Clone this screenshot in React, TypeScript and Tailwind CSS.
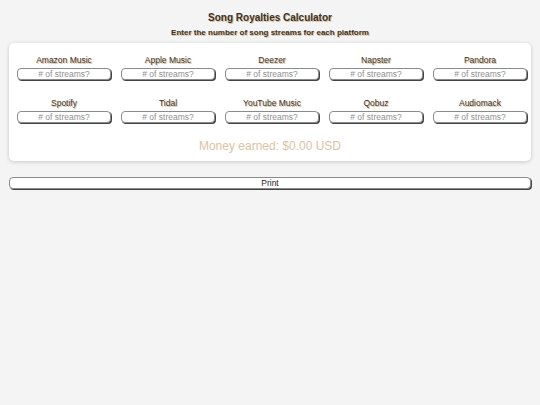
import { useState } from 'react';

const platforms = [
  'Amazon Music',
  'Apple Music',
  'Deezer',
  'Napster',
  'Pandora',
  'Spotify',
  'Tidal',
  'YouTube Music',
  'Qobuz',
  'Audiomack',
];

const shadowText = '[text-shadow:1px_1px_0_#dcc09a]';

export default function App() {
  const [values, setValues] = useState<Record<string, string>>({});

  return (
    <div className="min-h-[405px] bg-[#f4f4f4] font-['Liberation_Sans',Arial,sans-serif] pt-[12px]">
      <h1 className={`text-center text-[10px] font-bold text-[#3a332b] leading-[12px] ${shadowText}`}>
        Song Royalties Calculator
      </h1>
      <p className={`text-center text-[8px] font-bold text-[#3a332b] mt-[4px] leading-[10px] ${shadowText}`}>
        Enter the number of song streams for each platform
      </p>

      <div className="mx-[9px] mt-[5px] bg-white rounded-[5px] shadow-[0_1px_4px_rgba(0,0,0,0.18)] pt-[12px] pb-[8px]">
        <div className="grid grid-cols-[repeat(5,94px)] pl-[8px] gap-x-[10px] gap-y-[18px]">
          {platforms.map((p) => (
            <div key={p} className="flex flex-col items-center">
              <label className={`text-[8.5px] text-[#3a332b] leading-[10px] mb-[3px] ${shadowText}`}>{p}</label>
              <input
                value={values[p] ?? ''}
                onChange={(e) => setValues({ ...values, [p]: e.target.value })}
                placeholder="# of streams?"
                className="w-[94px] h-[12px] rounded-[4px] border border-[#8a8a8a] bg-white text-center text-[8.5px] leading-[10px] text-[#555] placeholder:text-[#8f8f8f] shadow-[1px_1px_0_#444] outline-none"
              />
            </div>
          ))}
        </div>
        <p className="text-center text-[12px] text-[#dcc29f] mt-[16px] leading-[14px]">
          Money earned: $0.00 USD
        </p>
      </div>

      <button className="block mx-[9px] mt-[16px] w-[522px] h-[12px] rounded-[4px] border border-[#8a8a8a] bg-white shadow-[1px_1px_0_#444] text-[8.5px] font-normal leading-[10px] text-[#222]">
        Print
      </button>
    </div>
  );
}
